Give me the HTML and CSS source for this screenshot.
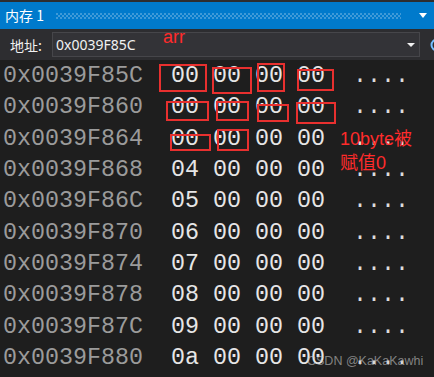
FILE: index.html
```html
<!DOCTYPE html>
<html lang="zh">
<head>
<meta charset="utf-8">
<title>内存 1</title>
<link rel="stylesheet" href="styles.css">
</head>
<body>
<div class="window">
  <div class="titlebar">
    <span class="title">内存 1</span>
    <span class="grip"></span>
    <span class="menu-tri"></span>
  </div>
  <div class="toolbar">
    <span class="label">地址:</span>
    <div class="addrbox">
      <span class="addrtext">0x0039F85C</span>
      <span class="caret"></span>
    </div>
    <svg class="refresh" width="16" height="16" viewBox="0 0 16 16"><path d="M8 2.5a5.5 5.5 0 1 0 5.5 5.5" fill="none" stroke="#75beff" stroke-width="2"/></svg>
  </div>
  <div class="mem">
    <div class="row"><span class="a">0x0039F85C</span>  <span class="b">00 00 00 00</span>  <span class="c">....</span></div>
    <div class="row"><span class="a">0x0039F860</span>  <span class="b">00 00 00 00</span>  <span class="c">....</span></div>
    <div class="row"><span class="a">0x0039F864</span>  <span class="b">00 00 00 00</span>  <span class="c">....</span></div>
    <div class="row"><span class="a">0x0039F868</span>  <span class="b">04 00 00 00</span>  <span class="c">....</span></div>
    <div class="row"><span class="a">0x0039F86C</span>  <span class="b">05 00 00 00</span>  <span class="c">....</span></div>
    <div class="row"><span class="a">0x0039F870</span>  <span class="b">06 00 00 00</span>  <span class="c">....</span></div>
    <div class="row"><span class="a">0x0039F874</span>  <span class="b">07 00 00 00</span>  <span class="c">....</span></div>
    <div class="row"><span class="a">0x0039F878</span>  <span class="b">08 00 00 00</span>  <span class="c">....</span></div>
    <div class="row"><span class="a">0x0039F87C</span>  <span class="b">09 00 00 00</span>  <span class="c">....</span></div>
    <div class="row"><span class="a">0x0039F880</span>  <span class="b">0a 00 00 00</span>  <span class="c">....</span></div>
  </div>

  <span class="note note-arr">arr</span>
  <span class="note note-10">10byte被<br>赋值0</span>
  <span class="box" style="left:159px;top:64px;width:48px;height:28px"></span>
  <span class="box" style="left:212px;top:67px;width:40px;height:27px"></span>
  <span class="box" style="left:257px;top:63px;width:28px;height:29px"></span>
  <span class="box" style="left:297px;top:69px;width:37px;height:22px"></span>
  <span class="box" style="left:166px;top:101px;width:43px;height:20px"></span>
  <span class="box" style="left:216px;top:101px;width:33px;height:20px"></span>
  <span class="box" style="left:257px;top:104px;width:32px;height:18px"></span>
  <span class="box" style="left:296px;top:102px;width:40px;height:22px"></span>
  <span class="box" style="left:170px;top:134px;width:41px;height:17px"></span>
  <span class="box" style="left:217px;top:129px;width:32px;height:22px"></span>
  <span class="watermark">CSDN @KaKaKawhi</span>
</div>
</body>
</html>
```

FILE: styles.css
```css
html, body {
  margin: 0;
  padding: 0;
  background: #1e1e1e;
  overflow: hidden;
}

.window {
  position: relative;
  width: 434px;
  height: 377px;
  overflow: hidden;
  background: #1e1e1e;
}

.titlebar {
  display: flex;
  align-items: center;
  height: 27px;
  border-top: 2px solid #2d2d30;
  background: #007acc;
  padding-left: 5px;
  padding-right: 7px;
  color: #ffffff;
}

.title {
  font-family: "Noto Sans CJK SC", "Noto Sans", sans-serif;
  font-size: 14px;
  line-height: 27px;
  white-space: nowrap;
}

.grip {
  flex: 1;
  height: 6px;
  margin: 0 18px 0 12px;
  background-image:
    radial-gradient(circle at 1px 1px, #3f9ad8 0.8px, transparent 1px),
    radial-gradient(circle at 1px 1px, #3f9ad8 0.8px, transparent 1px);
  background-size: 4px 4px, 4px 4px;
  background-position: 0 0, 2px 2px;
}

.menu-tri {
  width: 0;
  height: 0;
  border-left: 4px solid transparent;
  border-right: 4px solid transparent;
  border-top: 5px solid #ffffff;
}

.toolbar {
  display: flex;
  align-items: center;
  height: 31px;
  background: #2d2d30;
  padding-left: 10px;
}

.label {
  font-family: "Noto Sans CJK SC", "Noto Sans", sans-serif;
  font-size: 14px;
  color: #f1f1f1;
  width: 42px;
  flex: none;
}

.addrbox {
  display: flex;
  align-items: center;
  box-sizing: border-box;
  width: 368px;
  height: 25px;
  flex: none;
  background: #333337;
  border: 1px solid #46464a;
  padding-left: 3px;
  padding-right: 4px;
}

.addrtext {
  flex: 1;
  font-family: "Noto Sans", sans-serif;
  font-size: 14px;
  color: #f1f1f1;
}

.caret {
  width: 0;
  height: 0;
  border-left: 4px solid transparent;
  border-right: 4px solid transparent;
  border-top: 4px solid #f1f1f1;
}

.refresh {
  flex: none;
  margin-left: 9px;
}

.mem {
  padding: 1px 0 0 3px;
  font-family: "Liberation Mono", "DejaVu Sans Mono", monospace;
  font-size: 23.33px;
  line-height: 31.33px;
}

.row {
  white-space: pre;
  color: #dcdcdc;
}

.a {
  color: #9b9b9b;
}

.b {
  color: #e6e6e6;
}

.c {
  color: #dcdcdc;
}

.note {
  position: absolute;
  color: #ff2b2b;
  font-family: "Liberation Sans", "Noto Sans CJK SC", sans-serif;
}

.note-arr {
  left: 163px;
  top: 26px;
  font-size: 18px;
  line-height: 22px;
}

.note-10 {
  left: 340px;
  top: 127px;
  font-size: 18px;
  line-height: 24px;
}

.box {
  position: absolute;
  box-sizing: border-box;
  border: 2px solid #e8302f;
}

.watermark {
  position: absolute;
  left: 307px;
  top: 354px;
  font-family: "Liberation Sans", sans-serif;
  font-size: 12.5px;
  color: rgba(200, 200, 200, 0.6);
  white-space: nowrap;
}
```
